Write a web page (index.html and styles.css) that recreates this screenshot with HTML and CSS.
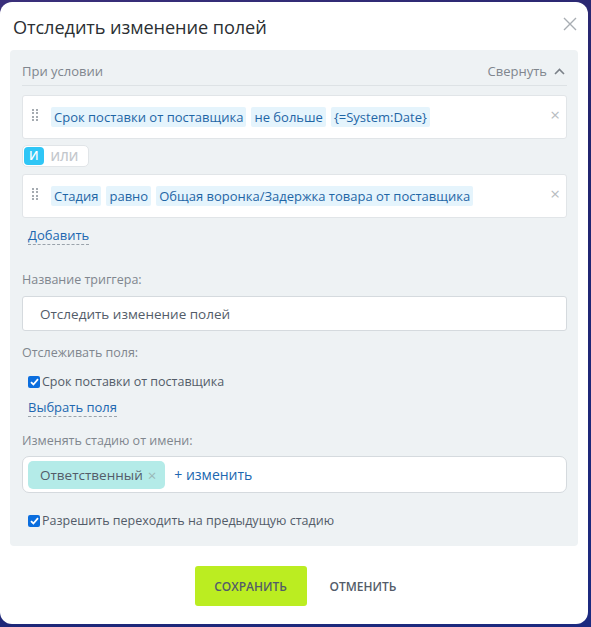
FILE: index.html
```html
<!DOCTYPE html>
<html lang="ru">
<head>
<meta charset="utf-8">
<link rel="stylesheet" href="styles.css">
</head>
<body>
<div class="popup">
  <div class="popup-head">
    <div class="popup-title">Отследить изменение полей</div>
    <svg class="popup-close" width="14" height="14" viewBox="0 0 14 14"><path d="M1 1L13 13M13 1L1 13" stroke="#a8adb3" stroke-width="1.4" fill="none"/></svg>
  </div>
  <div class="panel">
    <div class="cond-head">
      <span class="muted">При условии</span>
      <span class="collapse">Свернуть <svg width="11" height="7" viewBox="0 0 11 7"><path d="M1 6L5.5 1.5L10 6" stroke="#7b8189" stroke-width="1.6" fill="none"/></svg></span>
    </div>
    <div class="cond-box">
      <span class="drag"><i></i><i></i><i></i><i></i><i></i><i></i><i></i><i></i></span>
      <span class="chip">Срок поставки от поставщика</span>
      <span class="chip">не больше</span>
      <span class="chip">{=System:Date}</span>
      <span class="del">×</span>
    </div>
    <div class="toggle"><span class="tg-on">И</span><span class="tg-off">ИЛИ</span></div>
    <div class="cond-box">
      <span class="drag"><i></i><i></i><i></i><i></i><i></i><i></i><i></i><i></i></span>
      <span class="chip">Стадия</span>
      <span class="chip">равно</span>
      <span class="chip">Общая воронка/Задержка товара от поставщика</span>
      <span class="del">×</span>
    </div>
    <div class="link-row add-row"><span class="dlink">Добавить</span></div>
    <div class="label">Название триггера:</div>
    <div class="input">Отследить изменение полей</div>
    <div class="label label-track">Отслеживать поля:</div>
    <label class="check"><span class="cb"><svg width="9" height="8" viewBox="0 0 9 8"><path d="M1 4.2L3.4 6.5L8 1.2" stroke="#fff" stroke-width="1.8" fill="none"/></svg></span>Срок поставки от поставщика</label>
    <div class="link-row pick-row"><span class="dlink">Выбрать поля</span></div>
    <div class="label label-user">Изменять стадию от имени:</div>
    <div class="user-box">
      <span class="user-chip">Ответственный <span class="uc-x">×</span></span>
      <span class="change">+ изменить</span>
    </div>
    <label class="check check-prev"><span class="cb"><svg width="9" height="8" viewBox="0 0 9 8"><path d="M1 4.2L3.4 6.5L8 1.2" stroke="#fff" stroke-width="1.8" fill="none"/></svg></span>Разрешить переходить на предыдущую стадию</label>
  </div>
  <div class="buttons">
    <span class="btn-save">СОХРАНИТЬ</span>
    <span class="btn-cancel">ОТМЕНИТЬ</span>
  </div>
</div>
</body>
</html>
```

FILE: styles.css
```css
html, body {
  margin: 0;
  padding: 0;
}
body {
  width: 591px;
  height: 627px;
  overflow: hidden;
  background: linear-gradient(160deg, #3a2f7a 0%, #22246e 40%, #1c2a80 100%);
  font-family: "Open Sans", "Noto Sans", sans-serif;
  color: #333;
  padding-top: 2px;
  box-sizing: border-box;
}
.popup {
  width: 588px;
  height: 622px;
  background: #fff;
  border-radius: 12px;
  box-sizing: border-box;
  display: flex;
  flex-direction: column;
}
.popup-head {
  height: 48px;
  display: flex;
  align-items: center;
  justify-content: space-between;
  padding: 0 11px 0 13px;
}
.popup-title {
  font-size: 18.2px;
  color: #2b2f33;
  letter-spacing: -0.1px;
  padding-top: 1px;
}
.popup-close {
  margin-top: -4px;
}
.panel {
  margin: 0 10px;
  background: #eef2f4;
  border-radius: 4px;
  padding: 0 11px 0 12px;
  height: 496px;
  box-sizing: border-box;
}
.cond-head {
  height: 36px;
  box-sizing: border-box;
  padding-top: 7px;
  border-bottom: 1px solid #dde2e5;
  display: flex;
  justify-content: space-between;
  align-items: center;
  font-size: 13px;
}
.muted {
  color: #80868e;
}
.collapse {
  color: #80868e;
  display: flex;
  align-items: center;
  gap: 7px;
  padding-right: 2px;
}
.cond-box {
  margin-top: 9px;
  height: 44px;
  box-sizing: border-box;
  background: #fff;
  border: 1px solid #e1e5e8;
  border-radius: 3px;
  display: flex;
  align-items: center;
  padding: 0 8px 0 9px;
  gap: 5px;
  position: relative;
}
.cond-box + .toggle {
  margin-top: 6px;
}
.drag {
  display: grid;
  grid-template-columns: 2px 2px;
  column-gap: 2px;
  row-gap: 1.5px;
  width: 6px;
  margin-right: 8px;
  margin-top: -4px;
}
.drag i {
  width: 2px;
  height: 2px;
  background: #a5abb1;
  display: block;
}
.chip {
  background: #e5f4fc;
  color: #1f66a6;
  font-size: 13px;
  line-height: 20px;
  padding: 0 3px;
  border-radius: 2px;
}
.del {
  position: absolute;
  right: 6px;
  top: 9px;
  color: #b7bcc1;
  font-size: 17px;
  line-height: 20px;
}
.toggle {
  display: inline-flex;
  background: #fff;
  border: 1px solid #e1e5e8;
  border-radius: 5px;
  height: 22px;
  box-sizing: border-box;
  align-items: center;
  padding: 0 1px;
  font-size: 12px;
}
.toggle + .cond-box {
  margin-top: 7px;
}
.tg-on {
  background: #2fc6f6;
  color: #fff;
  font-weight: 600;
  border-radius: 4px;
  padding: 0 5px;
  line-height: 18px;
}
.tg-off {
  color: #c3c7cc;
  padding: 0 9px 0 7px;
  font-weight: 600;
}
.link-row {
  font-size: 13px;
  padding-left: 6px;
}
.add-row {
  margin-top: 8px;
}
.dlink {
  color: #2067b0;
  border-bottom: 1px dashed #9aa3ab;
  line-height: 18px;
  display: inline-block;
}
.label {
  font-size: 12.5px;
  color: #80868e;
  margin-top: 26px;
  line-height: 18px;
}
.input {
  margin-top: 7px;
  height: 35px;
  box-sizing: border-box;
  background: #fff;
  border: 1px solid #d5dade;
  border-radius: 3px;
  font-size: 13.5px;
  color: #535c69;
  display: flex;
  align-items: center;
  padding-left: 17px;
}
.label-track {
  margin-top: 13px;
}
.check {
  display: flex;
  align-items: center;
  font-size: 12.5px;
  color: #535c69;
  margin-top: 11px;
  padding-left: 6px;
  line-height: 18px;
}
.cb {
  width: 12px;
  height: 12px;
  border-radius: 2px;
  background: #0b6ede;
  display: inline-flex;
  align-items: center;
  justify-content: center;
  margin-right: 2px;
}
.pick-row {
  margin-top: 7px;
}
.label-user {
  margin-top: 15px;
}
.user-box {
  margin-top: 6px;
  height: 37px;
  box-sizing: border-box;
  background: #fff;
  border: 1px solid #d5dade;
  border-radius: 7px;
  display: flex;
  align-items: center;
  padding-left: 5px;
}
.user-chip {
  background: #b4ebe8;
  color: #535c69;
  font-size: 13.5px;
  height: 28px;
  border-radius: 5px;
  display: inline-flex;
  align-items: center;
  padding: 0 9px 0 12px;
}
.uc-x {
  color: #9ab8b7;
  font-size: 15px;
  margin-left: 5px;
}
.change {
  color: #2067b0;
  font-size: 14px;
  margin-left: 9px;
}
.check-prev {
  margin-top: 19px;
}
.buttons {
  display: flex;
  justify-content: center;
  align-items: center;
  margin-top: 20px;
  gap: 23px;
  padding-left: 3px;
}
.btn-save {
  background: #bbed21;
  color: #535c69;
  font-size: 12px;
  font-weight: 600;
  height: 40px;
  width: 100px;
  padding: 0 6px;
  border-radius: 3px;
  display: flex;
  align-items: center;
  justify-content: center;
}
.btn-cancel {
  color: #535c69;
  font-size: 12px;
  font-weight: 600;
}
```
